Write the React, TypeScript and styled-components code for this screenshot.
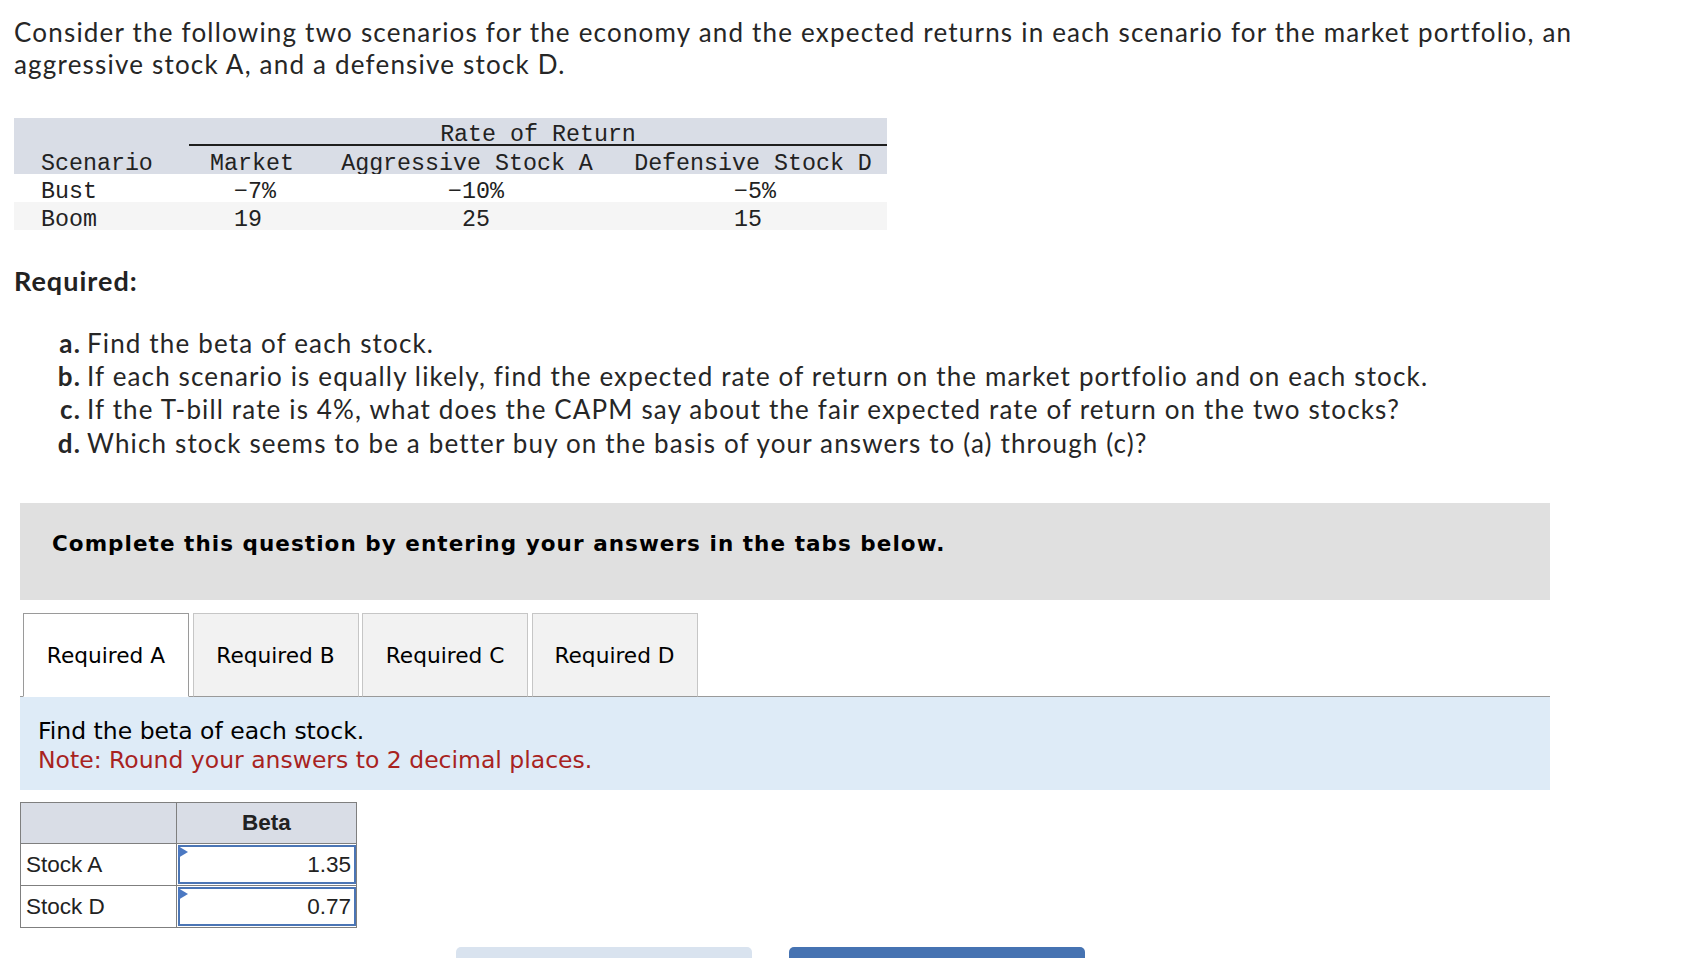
import React from 'react'
import styled, { createGlobalStyle } from 'styled-components'

// ============================================================================
// Data
// ============================================================================

const scenarios = [
  { name: 'Bust', market: '−7', aggressive: '−10', defensive: '−5', pct: true },
  { name: 'Boom', market: '19', aggressive: '25', defensive: '15', pct: false },
]

const requirements = [
  { label: 'a.', text: 'Find the beta of each stock.' },
  { label: 'b.', text: 'If each scenario is equally likely, find the expected rate of return on the market portfolio and on each stock.' },
  { label: 'c.', text: 'If the T-bill rate is 4%, what does the CAPM say about the fair expected rate of return on the two stocks?' },
  { label: 'd.', text: 'Which stock seems to be a better buy on the basis of your answers to (a) through (c)?' },
]

const tabs = ['Required A', 'Required B', 'Required C', 'Required D']

const betas = [
  { stock: 'Stock A', value: '1.35' },
  { stock: 'Stock D', value: '0.77' },
]

// ============================================================================
// Styled Components
// ============================================================================

const GlobalStyle = createGlobalStyle`
  html, body {
    margin: 0;
    padding: 0;
    background: #ffffff;
  }
  body {
    font-family: Lato, "Open Sans", sans-serif;
    color: #222222;
  }
`

const Page = styled.div`
  padding: 16px 0 0 14px;
  width: 1640px;
`

const Intro = styled.p`
  margin: 0;
  max-width: 1600px;
  font-family: Lato, sans-serif;
  font-size: 26px;
  letter-spacing: 1.2px;
  line-height: 32px;
  color: #262626;
`

const ReturnTable = styled.div`
  margin-top: 38px;
  display: grid;
  grid-template-columns: 175px 126px 304px 268px;
  grid-auto-rows: 28px;
  width: 873px;
  font-family: "Liberation Mono", "Courier New", monospace;
  font-size: 23.3px;
  color: #222222;
`

const HeadCell = styled.div<{ $span?: number; $align?: 'left' | 'center'; $rule?: boolean }>`
  grid-column: span ${(p) => p.$span ?? 1};
  display: flex;
  align-items: center;
  justify-content: ${(p) => (p.$align === 'left' ? 'flex-start' : 'center')};
  padding-left: ${(p) => (p.$align === 'left' ? '27px' : '0')};
  padding-top: 7px;
  background: #d9dde6;
  box-sizing: border-box;
  border-bottom: ${(p) => (p.$rule ? '2px solid #1e1e1e' : 'none')};
  white-space: pre;
`

const BodyCell = styled.div<{ $shade: boolean; $padRight?: number }>`
  display: flex;
  align-items: center;
  box-sizing: border-box;
  justify-content: ${(p) => (p.$padRight === undefined ? 'flex-start' : 'flex-end')};
  padding-left: ${(p) => (p.$padRight === undefined ? '27px' : '0')};
  padding-right: ${(p) => p.$padRight ?? 0}px;
  padding-top: 7px;
  background: ${(p) => (p.$shade ? '#f5f5f5' : '#ffffff')};
  white-space: pre;
`

const Pct = styled.span<{ $hidden: boolean }>`
  visibility: ${(p) => (p.$hidden ? 'hidden' : 'visible')};
`

const RequiredTitle = styled.h3`
  margin: 36px 0 0 0;
  font-family: Lato, sans-serif;
  font-size: 27px;
  font-weight: 700;
  letter-spacing: 1px;
  line-height: 30px;
  color: #222222;
`

const ReqList = styled.div`
  margin-top: 30px;
  display: grid;
  grid-template-columns: 67px 1fr;
  column-gap: 6px;
  grid-auto-rows: 33.3px;
  align-items: center;
  font-family: Lato, sans-serif;
  font-size: 26px;
  letter-spacing: 1.15px;
  color: #262626;
`

const ReqLabel = styled.span`
  font-weight: 700;
  text-align: right;
`

const ReqText = styled.span`
  white-space: nowrap;
`

const AnswerArea = styled.div`
  margin: 44px 0 0 6px;
  width: 1530px;
`

const Instructions = styled.div`
  height: 97px;
  box-sizing: border-box;
  padding: 28px 32px 0;
  background: #e0e0e0;
  font-family: "DejaVu Sans", Verdana, sans-serif;
  font-weight: 700;
  font-size: 21.5px;
  letter-spacing: 1.05px;
  line-height: 26px;
  color: #000000;
`

const TabBar = styled.div`
  margin-top: 13px;
  display: flex;
  gap: 3.5px;
  padding-left: 3px;
  border-bottom: 1px solid #9a9a9a;
`

const Tab = styled.button<{ $active: boolean }>`
  width: 166px;
  height: 84px;
  margin-bottom: -1px;
  box-sizing: border-box;
  border: 1px solid ${(p) => (p.$active ? '#9a9a9a' : '#c6c6c6')};
  border-bottom: 1px solid ${(p) => (p.$active ? '#ffffff' : '#9a9a9a')};
  background: ${(p) => (p.$active ? '#ffffff' : '#f2f2f2')};
  font-family: "DejaVu Sans", Verdana, sans-serif;
  font-size: 21.7px;
  color: #000000;
  padding: 0;
  cursor: pointer;
`

const Prompt = styled.div`
  height: 93px;
  box-sizing: border-box;
  padding: 20px 18px 0;
  background: #deebf7;
  font-family: "DejaVu Sans", Verdana, sans-serif;
  font-size: 23.5px;
  line-height: 29px;
  color: #000000;
`

const Note = styled.div`
  color: #a8231f;
`

const BetaTable = styled.div`
  margin-top: 12px;
  display: grid;
  grid-template-columns: 156px 180px;
  grid-template-rows: 41px 42px 41px;
  width: 337px;
  box-sizing: border-box;
  border: 1px solid #7f7f7f;
  font-family: "Liberation Sans", Arial, sans-serif;
  font-size: 22.5px;
  color: #222222;
`

const BetaHead = styled.div`
  background: #d9dde6;
  border-right: 1px solid #7f7f7f;
  border-bottom: 1px solid #7f7f7f;
  display: flex;
  align-items: center;
  justify-content: center;
  font-weight: 700;

  &:last-of-type {
    border-right: none;
  }
`

const StockCell = styled.div<{ $last: boolean }>`
  display: flex;
  align-items: center;
  padding-left: 5px;
  border-right: 1px solid #7f7f7f;
  border-bottom: ${(p) => (p.$last ? 'none' : '1px solid #7f7f7f')};
`

const InputWrap = styled.div<{ $last: boolean }>`
  position: relative;
  padding: 1px;
  border-bottom: ${(p) => (p.$last ? 'none' : '1px solid #7f7f7f')};
`

const BetaInput = styled.div`
  height: 100%;
  box-sizing: border-box;
  border: 2px solid #4b75b5;
  display: flex;
  align-items: center;
  justify-content: flex-end;
  padding-right: 3px;
`

const Marker = styled.span`
  position: absolute;
  left: 1px;
  top: 2px;
  width: 0;
  height: 0;
  border-top: 6px solid transparent;
  border-bottom: 6px solid transparent;
  border-left: 10px solid #4b78c2;
`

const NavRow = styled.div`
  margin-top: 19px;
  padding-left: 436px;
  display: flex;
  gap: 37px;
`

const NavButton = styled.button<{ $primary: boolean }>`
  width: 296px;
  height: 56px;
  border: none;
  border-radius: 5px;
  background: ${(p) => (p.$primary ? '#4673b2' : '#d9e3ef')};
  cursor: pointer;
`

// ============================================================================
// Component
// ============================================================================

export default function App() {
  return (
    <Page>
      <GlobalStyle />
      <Intro>
        Consider the following two scenarios for the economy and the expected returns in each scenario for the market
        portfolio, an aggressive stock A, and a defensive stock D.
      </Intro>

      <ReturnTable>
        <HeadCell />
        <HeadCell $span={3} $rule>
          Rate of Return
        </HeadCell>
        <HeadCell $align="left">Scenario</HeadCell>
        <HeadCell>Market</HeadCell>
        <HeadCell>Aggressive Stock A</HeadCell>
        <HeadCell>Defensive Stock D</HeadCell>
        {scenarios.map((s, i) => (
          <React.Fragment key={s.name}>
            <BodyCell $shade={i === 1}>{s.name}</BodyCell>
            <BodyCell $shade={i === 1} $padRight={39}>
              {s.market}
              <Pct $hidden={!s.pct}>%</Pct>
            </BodyCell>
            <BodyCell $shade={i === 1} $padRight={115}>
              {s.aggressive}
              <Pct $hidden={!s.pct}>%</Pct>
            </BodyCell>
            <BodyCell $shade={i === 1} $padRight={111}>
              {s.defensive}
              <Pct $hidden={!s.pct}>%</Pct>
            </BodyCell>
          </React.Fragment>
        ))}
      </ReturnTable>

      <RequiredTitle>Required:</RequiredTitle>
      <ReqList>
        {requirements.map((r) => (
          <React.Fragment key={r.label}>
            <ReqLabel>{r.label}</ReqLabel>
            <ReqText>{r.text}</ReqText>
          </React.Fragment>
        ))}
      </ReqList>

      <AnswerArea>
        <Instructions>Complete this question by entering your answers in the tabs below.</Instructions>
        <TabBar>
          {tabs.map((t, i) => (
            <Tab key={t} $active={i === 0}>
              {t}
            </Tab>
          ))}
        </TabBar>
        <Prompt>
          <div>Find the beta of each stock.</div>
          <Note>Note: Round your answers to 2 decimal places.</Note>
        </Prompt>

        <BetaTable>
          <BetaHead />
          <BetaHead>Beta</BetaHead>
          {betas.map((b, i) => (
            <React.Fragment key={b.stock}>
              <StockCell $last={i === betas.length - 1}>{b.stock}</StockCell>
              <InputWrap $last={i === betas.length - 1}>
                <BetaInput>{b.value}</BetaInput>
                <Marker />
              </InputWrap>
            </React.Fragment>
          ))}
        </BetaTable>

        <NavRow>
          <NavButton $primary={false} aria-label="Previous: Required A" />
          <NavButton $primary aria-label="Next: Required B" />
        </NavRow>
      </AnswerArea>
    </Page>
  )
}
